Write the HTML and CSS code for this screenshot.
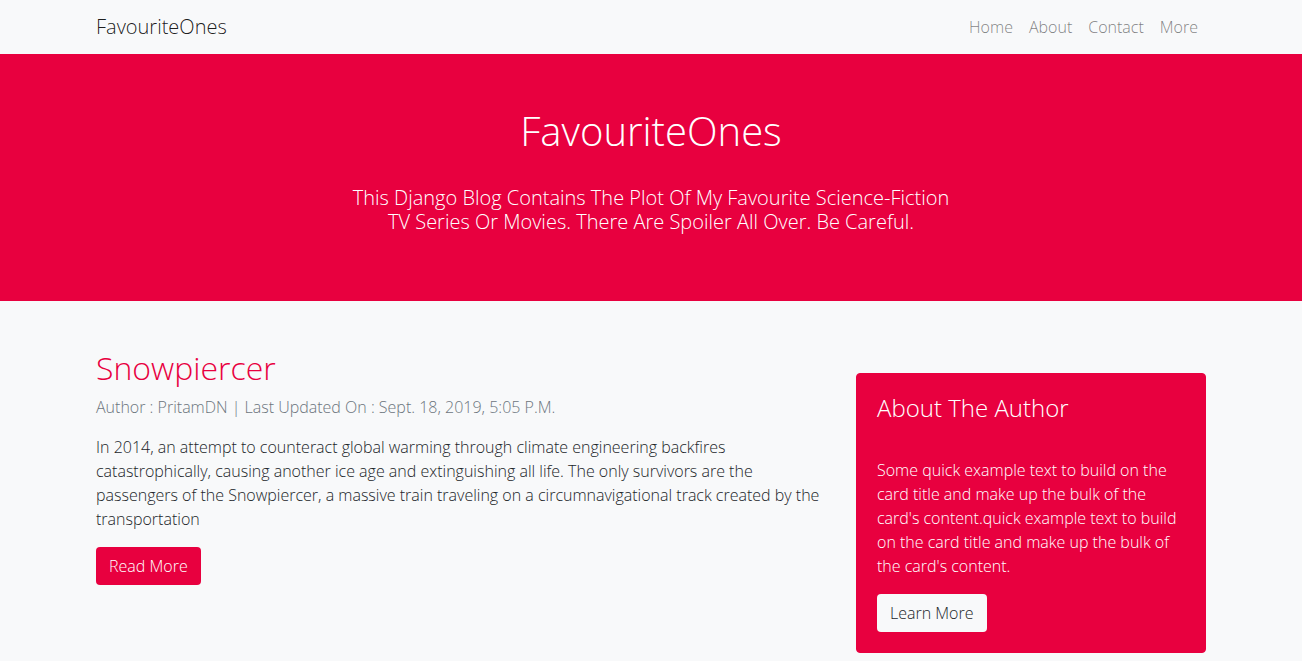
FILE: index.html
```html
<!DOCTYPE html>
<html lang="en">
<head>
<meta charset="utf-8">
<title>FavouriteOnes</title>
<link rel="stylesheet" href="styles.css">
</head>
<body>
<nav class="navbar">
  <div class="container nav-inner">
    <a class="brand" href="#">FavouriteOnes</a>
    <ul class="nav-links">
      <li><a href="#">Home</a></li>
      <li><a href="#">About</a></li>
      <li><a href="#">Contact</a></li>
      <li><a href="#">More</a></li>
    </ul>
  </div>
</nav>
<header class="hero">
  <h1 class="hero-title">FavouriteOnes</h1>
  <p class="hero-sub">This Django Blog Contains The Plot Of My Favourite Science-Fiction TV Series Or Movies. There Are Spoiler All Over. Be Careful.</p>
</header>
<main class="main">
  <div class="container row">
    <article class="post">
      <h2 class="post-title">Snowpiercer</h2>
      <p class="post-meta">Author : PritamDN | Last Updated On : Sept. 18, 2019, 5:05 P.M.</p>
      <p class="post-text">In 2014, an attempt to counteract global warming through climate engineering backfires catastrophically, causing another ice age and extinguishing all life. The only survivors are the passengers of the Snowpiercer, a massive train traveling on a circumnavigational track created by the transportation</p>
      <a href="#" class="btn btn-red">Read More</a>
    </article>
    <aside class="side">
      <div class="card">
        <h4 class="card-title">About The Author</h4>
        <p class="card-text">Some quick example text to build on the card title and make up the bulk of the card's content.quick example text to build on the card title and make up the bulk of the card's content.</p>
        <a href="#" class="btn btn-light">Learn More</a>
      </div>
    </aside>
  </div>
</main>
</body>
</html>
```
FILE: styles.css
```css
* { box-sizing: border-box; }
html, body { margin: 0; padding: 0; }
body {
  font-family: "Open Sans", "Liberation Sans", sans-serif;
  font-weight: 300;
  font-size: 16px;
  line-height: 1.5;
  color: #212529;
  background: #f8f9fa;
}
a { text-decoration: none; }
.container {
  width: 1140px;
  margin: 0 auto;
  padding: 0 15px;
}
.navbar {
  background: #f8f9fa;
  height: 54px;
}
.nav-inner {
  display: flex;
  align-items: center;
  justify-content: space-between;
  height: 54px;
}
.brand {
  font-size: 20px;
  line-height: 30px;
  color: rgba(0, 0, 0, 0.9);
}
.nav-links {
  display: flex;
  list-style: none;
  margin: 0;
  padding: 0;
}
.nav-links a {
  display: block;
  padding: 0 8px;
  color: rgba(0, 0, 0, 0.5);
  line-height: 24px;
}
.hero {
  background: #e8003f;
  color: #fff;
  text-align: center;
  padding: 53px 0 67px;
}
.hero-title {
  font-size: 40px;
  font-weight: 300;
  line-height: 48px;
  margin: 0 0 31px;
}
.hero-sub {
  font-size: 20px;
  line-height: 24px;
  margin: 0 auto;
  max-width: 610px;
}
.main {
  padding: 48px 0 40px;
}
.row {
  display: flex;
  align-items: flex-start;
}
.post {
  width: 730px;
  margin-right: 30px;
}
.post-title {
  font-size: 32px;
  font-weight: 300;
  line-height: 38px;
  color: #e8003f;
  margin: 0 0 8px;
}
.post-meta {
  color: #6c757d;
  margin: 0 0 16px;
}
.post-text {
  margin: 0 0 16px;
}
.btn {
  display: inline-block;
  padding: 6px 12px;
  line-height: 24px;
  border: 1px solid transparent;
  border-radius: 4px;
  font-size: 16px;
}
.btn-red {
  background: #e8003f;
  color: #fff;
}
.btn-light {
  background: #f8f9fa;
  color: #212529;
}
.side {
  width: 350px;
  margin-top: 24px;
}
.card {
  background: #e8003f;
  color: #fff;
  border: 1px solid #e8003f;
  border-radius: 4px;
  padding: 19px 20px 20px;
}
.card-title {
  font-size: 24px;
  font-weight: 300;
  line-height: 29px;
  margin: 0 0 36px;
}
.card-text {
  margin: 0 0 16px;
}
```
